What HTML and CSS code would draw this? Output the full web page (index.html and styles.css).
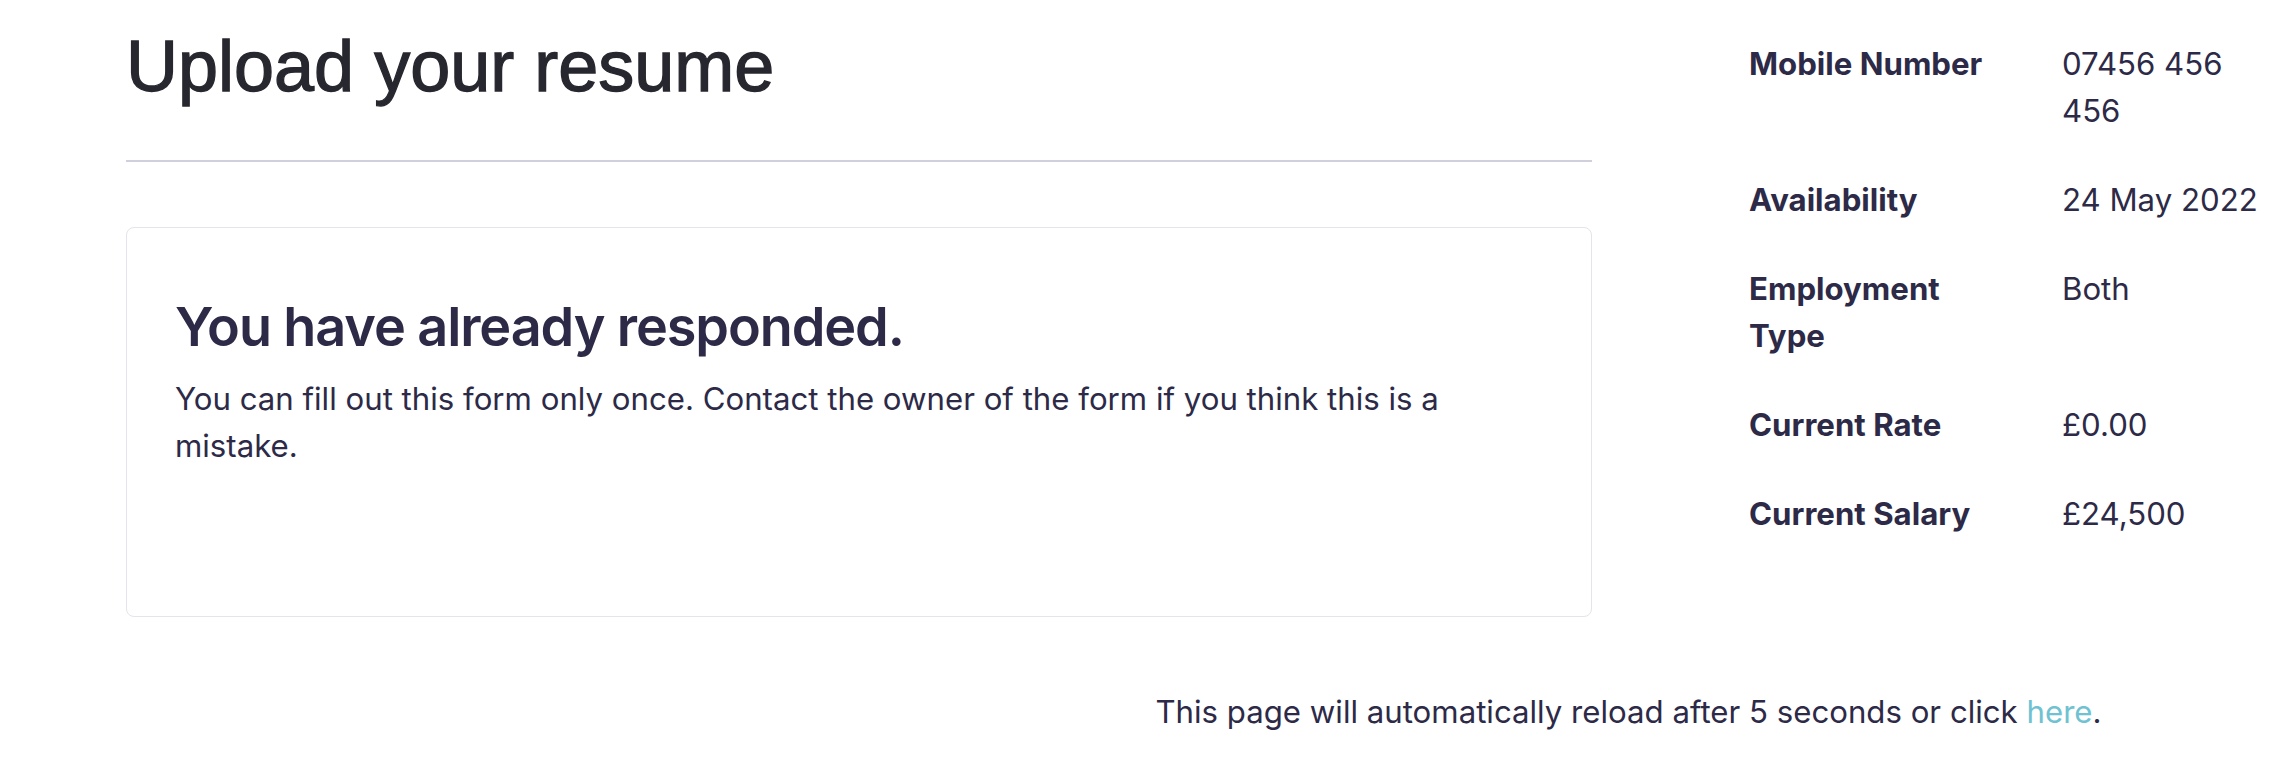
FILE: index.html
```html
<!DOCTYPE html>
<html lang="en">
<head>
<meta charset="utf-8">
<title>Upload your resume</title>
<link rel="stylesheet" href="styles.css">
</head>
<body>
<div class="page">
  <main class="main">
    <h1 class="title">Upload your resume</h1>
    <hr class="rule">
    <section class="card">
      <h2 class="card-title">You have already responded.</h2>
      <p class="card-text">You can fill out this form only once. Contact the owner of the form if you think this is a mistake.</p>
    </section>
  </main>
  <aside class="sidebar">
    <dl class="details">
      <dt>Mobile Number</dt><dd>07456 456 456</dd>
      <dt>Availability</dt><dd>24 May 2022</dd>
      <dt>Employment Type</dt><dd>Both</dd>
      <dt>Current Rate</dt><dd>£0.00</dd>
      <dt>Current Salary</dt><dd>£24,500</dd>
    </dl>
  </aside>
</div>
<footer class="footer">This page will automatically reload after 5 seconds or click <a href="#" class="link">here</a>.</footer>
</body>
</html>
```
FILE: styles.css
```css
html, body {
  margin: 0;
  padding: 0;
  background: #ffffff;
}

body {
  font-family: Inter, "Noto Sans", sans-serif;
  color: #2d2a48;
  width: 2280px;
  overflow: hidden;
}

.page {
  display: flex;
  align-items: flex-start;
  padding-left: 126px;
}

.main {
  width: 1466px;
  flex: none;
}

.title {
  font-family: "Liberation Sans", Arial, sans-serif;
  font-weight: 400;
  font-size: 72px;
  line-height: 86px;
  color: #27272f;
  -webkit-text-stroke: 1.3px #27272f;
  margin: 23px 0 0 0;
}

.rule {
  border: 0;
  height: 2px;
  background: #d0d0dc;
  margin: 51px 0 0 0;
}

.card {
  margin-top: 65px;
  border: 1.5px solid #e4e4ea;
  border-radius: 8px;
  padding: 66px 48px 146px 48px;
}

.card-title {
  font-size: 54px;
  font-weight: 600;
  line-height: 65px;
  margin: 0;
  letter-spacing: -1.1px;
}

.card-text {
  font-size: 31.2px;
  line-height: 47px;
  margin: 17px 0 0 0;
}

.sidebar {
  margin-left: 157px;
  flex: 1;
  padding-top: 41px;
}

.details {
  display: grid;
  grid-template-columns: 250px 1fr;
  column-gap: 63px;
  row-gap: 42px;
  margin: 0;
  font-size: 31.2px;
  line-height: 47px;
  padding-right: 14px;
}

.details dt {
  font-weight: 700;
}

.details dd {
  margin: 0;
}

.footer {
  margin-top: 72px;
  padding-left: 977px;
  text-align: center;
  font-size: 31.2px;
  line-height: 47px;
}

.link {
  color: #6ec2d2;
  text-decoration: none;
}
```
